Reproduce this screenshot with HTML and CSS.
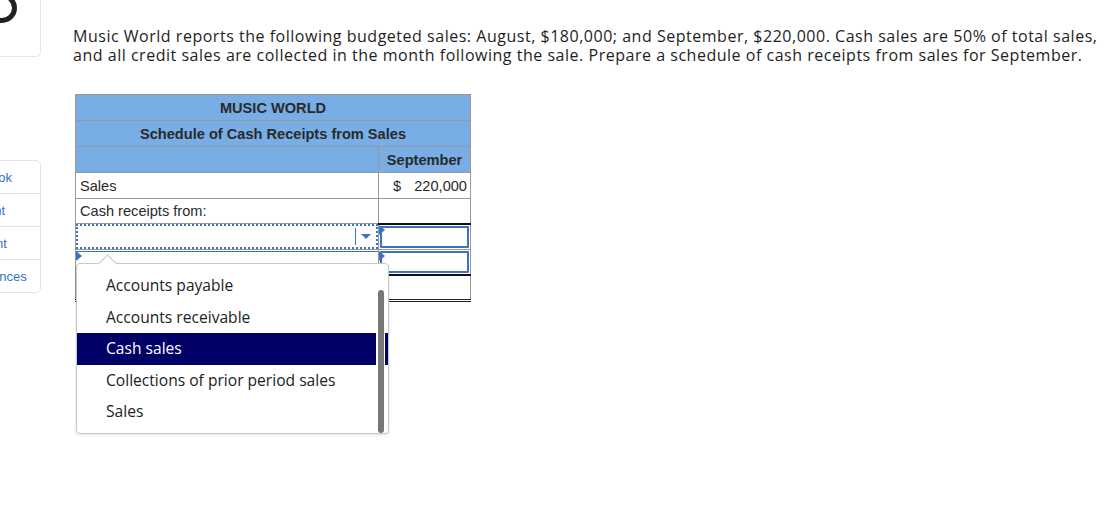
FILE: index.html
```html
<!DOCTYPE html>
<html>
<head>
<meta charset="utf-8">
<link rel="stylesheet" href="styles.css">
</head>
<body>
<div class="page">
  <aside class="sidebar">
    <div class="logo-card">
      <svg class="logo" width="40" height="40" viewBox="0 0 40 40"><circle cx="20" cy="14" r="12.5" fill="none" stroke="#222" stroke-width="5"/></svg>
    </div>
    <nav class="menu">
      <div class="menu-item">eBook</div>
      <div class="menu-item">Hint</div>
      <div class="menu-item">Print</div>
      <div class="menu-item">References</div>
    </nav>
  </aside>
  <main class="main">
    <p class="question">Music World reports the following budgeted sales: August, $180,000; and September, $220,000. Cash sales are 50% of total sales, and all credit sales are collected in the month following the sale. Prepare a schedule of cash receipts from sales for September.</p>
    <table class="sched">
      <tr class="hdr r26"><td colspan="2">MUSIC WORLD</td></tr>
      <tr class="hdr r26"><td colspan="2">Schedule of Cash Receipts from Sales</td></tr>
      <tr class="hdr r26"><td class="lbl"></td><td class="num">September</td></tr>
      <tr class="r26"><td class="lbl">Sales</td><td class="amt"><span>$</span><span>220,000</span></td></tr>
      <tr class="r25"><td class="lbl">Cash receipts from:</td><td class="amt"></td></tr>
      <tr class="inrow r26">
        <td class="lbl sel-cell">
          <div class="select focused"><span class="sel-btn"><span class="caret"></span></span></div>
          <span class="marker m-right"></span>
          <div class="popup">
            <span class="notch"></span>
            <ul class="options">
              <li>Accounts payable</li>
              <li>Accounts receivable</li>
              <li class="active">Cash sales</li>
              <li>Collections of prior period sales</li>
              <li>Sales</li>
            </ul>
            <div class="scroll"><div class="thumb"></div></div>
          </div>
        </td>
        <td class="amt top-line"><div class="input"></div></td>
      </tr>
      <tr class="inrow r25">
        <td class="lbl sel-cell"><div class="select plain"></div><span class="marker m-left"></span><span class="marker m-right"></span></td>
        <td class="amt bottom-line"><div class="input"></div></td>
      </tr>
      <tr class="total r26"><td class="lbl"></td><td class="amt"></td></tr>
    </table>
  </main>
</div>
</body>
</html>
```

FILE: styles.css
```css
html, body {
  margin: 0;
  padding: 0;
  background: #fff;
}
.page {
  display: flex;
  align-items: flex-start;
  width: 1113px;
  height: 529px;
  overflow: hidden;
}
.sidebar {
  flex: none;
  width: 95px;
  margin-left: -54px;
  display: flex;
  flex-direction: column;
}
.logo-card {
  height: 57px;
  box-sizing: border-box;
  border: 1px solid #e6e6e6;
  border-top: none;
  border-radius: 0 0 5px 0;
  overflow: hidden;
}
.logo {
  display: block;
  margin-left: 35px;
  margin-top: -6px;
}
.menu {
  margin-top: 103px;
  border: 1px solid #e3e3e3;
  border-radius: 0 5px 5px 0;
  display: flex;
  flex-direction: column;
}
.menu-item {
  height: 32px;
  line-height: 34px;
  text-align: center;
  font-family: "Liberation Sans", Arial, sans-serif;
  font-size: 13px;
  color: #3a6fc4;
  border-top: 1px solid #e3e3e3;
}
.menu-item:first-child { border-top: none; }

.main {
  flex: 1;
  margin-left: 32px;
  position: relative;
}
.question {
  margin: 27px 0 0 0;
  font-family: "Open Sans", sans-serif;
  font-size: 16px;
  letter-spacing: 0.52px;
  line-height: 19px;
  color: #1e1e1e;
  width: 1040px;
}
.sched {
  margin: 29px 0 0 2px;
  border-collapse: collapse;
  font-family: "Liberation Sans", Arial, sans-serif;
  font-size: 14.6px;
  color: #2a2a2a;
}
.sched td {
  border: 1px solid #999;
  padding: 0;
  box-sizing: border-box;
}
.r26 td { height: 26px; }
.r25 td { height: 25px; }
.sched td.lbl {
  width: 303px;
  padding-left: 4px;
}
.sched td.amt, .sched td.num {
  width: 92px;
}
.hdr td {
  background: #78ade5;
  text-align: center;
  font-weight: bold;
}
.hdr td.lbl { padding-left: 0; }
.amt span:first-child { padding-left: 14px; }
.amt span:last-child { float: right; padding-right: 3px; }
.amt { white-space: nowrap; }
.inrow td.sel-cell {
  padding: 0;
  position: relative;
}
.select {
  height: 100%;
  box-sizing: border-box;
}
.select.focused {
  border: 2px dotted #3b73c2;
  display: flex;
  justify-content: flex-end;
}
.sel-btn {
  width: 20px;
  border-left: 1px solid #3b73c2;
  display: flex;
  align-items: center;
  justify-content: center;
  margin: 2px 0;
}
.caret {
  width: 0;
  height: 0;
  border-left: 5px solid transparent;
  border-right: 5px solid transparent;
  border-top: 5px solid #3b73c2;
}
.select.plain {
  border-top: 1px solid #3b73c2;
  margin-top: 1px;
}
.inrow td.amt {
  padding: 1px;
}
.inrow td.top-line { border-top: 2px solid #111; }
.inrow td.bottom-line { border-bottom: 2px solid #111; }
.input {
  height: 100%;
  box-sizing: border-box;
  border: 2px solid #3b73c2;
  border-radius: 1px;
}
.total td { border-bottom: 3px double #222; }

.marker {
  position: absolute;
  width: 0;
  height: 0;
  border-top: 5px solid transparent;
  border-bottom: 5px solid transparent;
  border-left: 6px solid #3b73c2;
  top: 1px;
}
.m-right { right: -7px; }
.m-left { left: 0; }

.popup {
  position: absolute;
  left: 0;
  top: 39px;
  width: 313px;
  height: 171px;
  box-sizing: border-box;
  background: #fff;
  border: 1px solid #c8c8c8;
  border-radius: 4px;
  box-shadow: 0 1px 3px rgba(0,0,0,0.12);
  z-index: 5;
}
.notch {
  position: absolute;
  left: 24px;
  top: -7px;
  width: 12px;
  height: 12px;
  background: #fff;
  border-left: 1px solid #c8c8c8;
  border-top: 1px solid #c8c8c8;
  transform: rotate(45deg);
}
.options {
  list-style: none;
  margin: 0;
  padding: 6px 0 0 0;
  font-family: "Open Sans", sans-serif;
  font-size: 15.6px;
  color: #222;
}
.options li {
  height: 31.5px;
  line-height: 31px;
  padding-left: 29px;
}
.options li.active {
  background: #000066;
  color: #fff;
}
.scroll {
  position: absolute;
  right: 3px;
  top: 26px;
  bottom: 0;
  width: 9px;
  background: #fff;
  display: flex;
  justify-content: center;
}
.thumb {
  width: 6px;
  height: 100%;
  background: #777;
  border-radius: 3px;
}
```
